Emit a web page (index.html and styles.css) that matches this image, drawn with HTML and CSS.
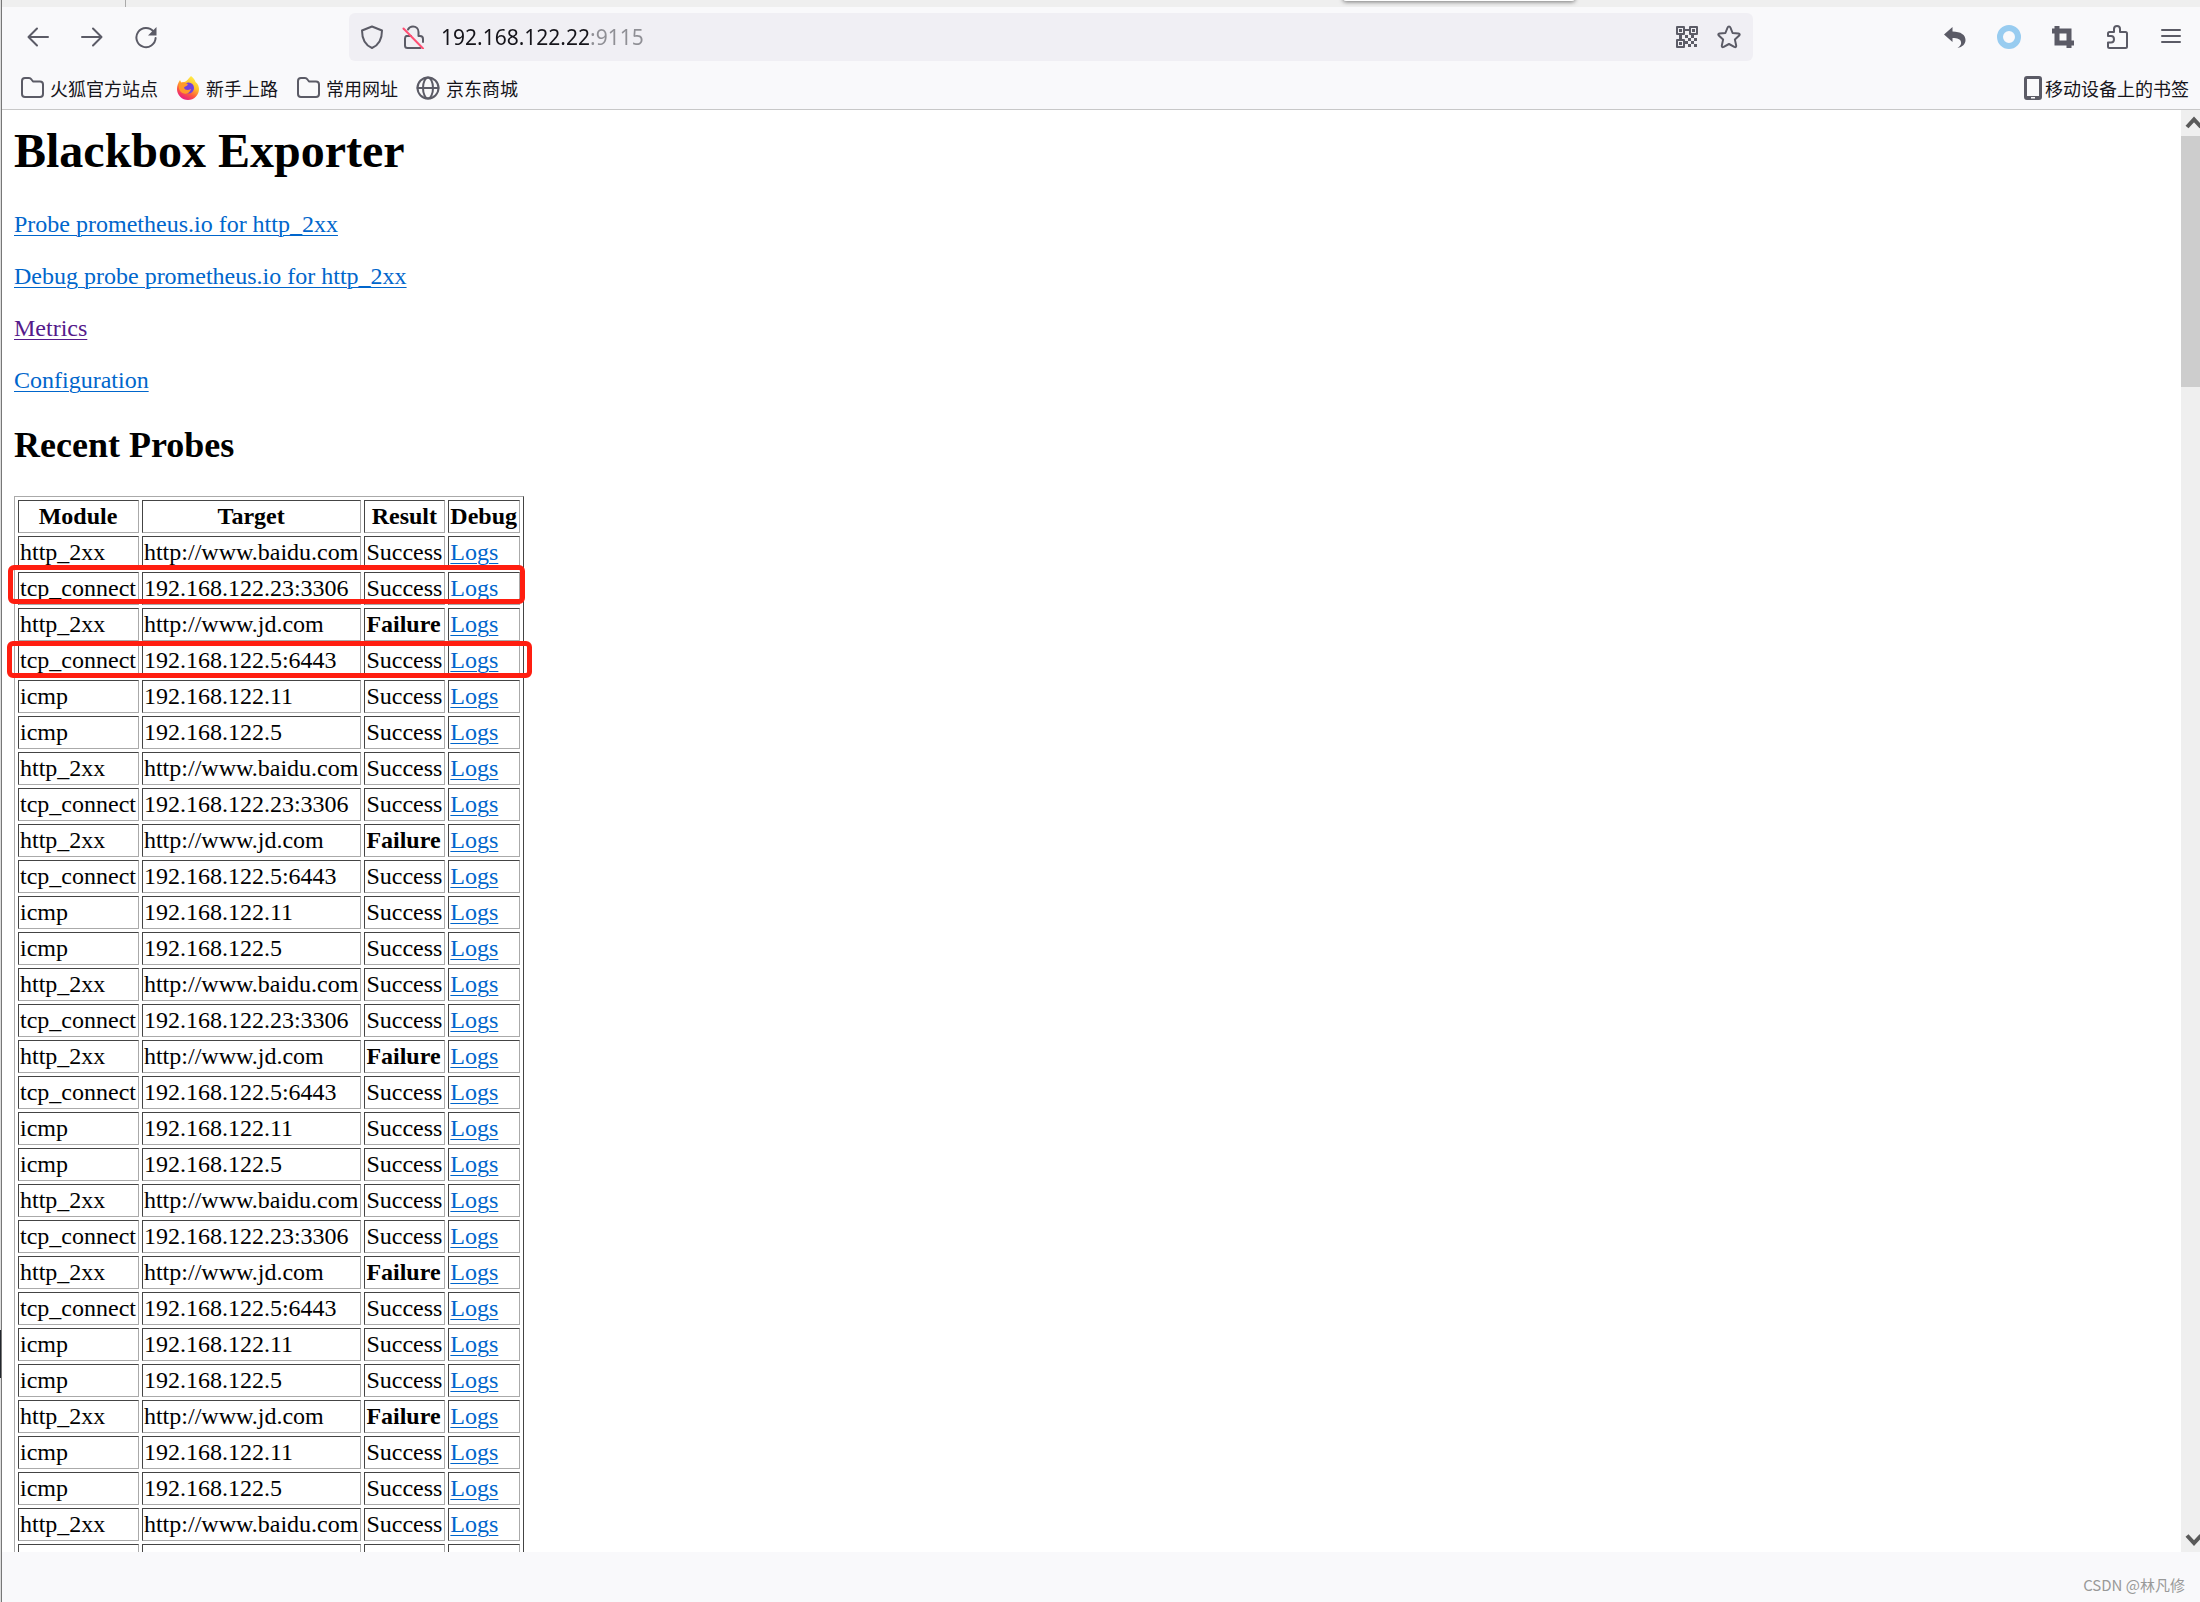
FILE: index.html
```html
<!DOCTYPE html>
<html lang="zh-CN">
<head>
<meta charset="utf-8">
<title>Blackbox Exporter</title>
<link rel="stylesheet" href="styles.css">
</head>
<body>
<div class="browser">
  <div class="tab-strip"><span class="tab-divider"></span><span class="tab-popup"></span></div>
  <header class="chrome">
    <div class="nav-bar">
      <div class="buttons">
        <button class="tool" aria-label="Back"><svg class="icon" viewBox="0 0 24 24"><path d="M22 12H3M11 3.500 2.500 12l8.500 8.500"/></svg></button>
        <button class="tool" aria-label="Forward"><svg class="icon" viewBox="0 0 24 24"><path d="M2 12h19M13 3.500 21.500 12 13 20.500"/></svg></button>
        <button class="tool" aria-label="Reload"><svg class="icon" viewBox="0 0 24 24"><path d="M19.500 6.500A9.600 9.600 0 1 0 21.600 13"/><path class="solid" d="M22.500 2v8.500h-8.500z"/></svg></button>
      </div>
      <div class="url-bar">
        <div class="url-icons">
          <svg class="icon" viewBox="0 0 24 24"><path d="M12 1.500 22 5.500C22 14 19 20 12 23 5 20 2 14 2 5.500z"/></svg>
          <svg class="icon" viewBox="0 0 24 24"><path d="M6 4.500C7 2.500 9 1.500 11 1.500c3 0 5.500 2.300 5.500 5.500v4h1.500q3 0 3 3v3M4.500 11Q3 11.500 3 13.500v7Q3 23 5.500 23h13"/><path d="M4.500 11H9"/><path class="slash" d="M1.500 3.500 21 23.500"/></svg>
        </div>
        <input class="url-input" type="text" value="192.168.122.22:9115" aria-label="Address">
        <div class="url-icons">
          <svg class="icon" viewBox="0 0 24 24"><path d="M2 2h7v7H2zM15 2h7v7h-7zM2 15h7v7H2z"/><path class="solid" d="M4 4h3v3H4zM17 4h3v3h-3zM4 17h3v3H4zM9 4h6v2H9zM4 9h3v6H4zM9 16h4v3H9zM10 10h3v3h-3zM16 10h3v3h-3zM13 13h3v3h-3zM19 13h3v3h-3zM16 16h3v3h-3zM13 19h3v3h-3zM19 19h3v3h-3z"/></svg>
          <svg class="icon" viewBox="0 0 24 24"><path d="M12 1.500q1 0 1.400 1L15.600 8l5.900.6q2 .4.700 2L17.900 14.600l1.300 6q.1 2.200-1.900 1.300L12 19l-5.300 2.900q-2 .9-1.900-1.300l1.300-6L1.800 10.600q-1.300-1.600.7-2L8.400 8l2.200-5.500q.4-1 1.400-1z"/></svg>
        </div>
      </div>
      <div class="buttons">
        <button class="tool" aria-label="Undo"><svg class="icon" viewBox="0 0 24 24"><path class="solid" d="M1 9.500 9.500 2v4.500C18 6.500 22.500 10 22.500 15c0 4-3 7-8 8 3-2 4-4 3.500-6-.5-3-3.500-4-8.500-4v4z"/></svg></button>
        <button class="tool" aria-label="Status"><svg class="icon" viewBox="0 0 24 24"><circle class="ring" cx="12" cy="12" r="9"/></svg></button>
        <button class="tool" aria-label="Screenshot"><svg class="icon" viewBox="0 0 24 24"><path class="thick" d="M1 6h17v17M6 1v17h17"/></svg></button>
        <button class="tool" aria-label="Extensions"><svg class="icon" viewBox="0 0 24 24"><path d="M3 11V8.500Q3 7 4.500 7H9V4q0-3 3-3t3 3v3h5.500Q22 7 22 8.500v13q0 1.500-1.500 1.500h-16Q3 23 3 21.500v-4h3q3 0 3-3.250T6 11z"/></svg></button>
        <button class="tool" aria-label="Menu"><svg class="icon" viewBox="0 0 24 24"><path d="M3 5h18M3 11h18M3 17h18"/></svg></button>
      </div>
    </div>
    <nav class="bookmarks">
      <a class="bookmark" href="#"><svg class="icon" viewBox="0 0 24 24"><path d="M2 5q0-3 3-3h4q1.500 0 2.500 1.500L13 5.500h7q3 0 3 3V18q0 3-3 3H5q-3 0-3-3z"/></svg>火狐官方站点</a>
      <a class="bookmark" href="#"><svg class="icon" viewBox="0 0 24 24"><defs><linearGradient id="flame" x1=".8" y1="0" x2=".3" y2="1"><stop offset="0" stop-color="#fff44f"/><stop offset=".4" stop-color="#ffc02a"/><stop offset=".7" stop-color="#ff5a3d"/><stop offset="1" stop-color="#e4168a"/></linearGradient></defs><path fill="url(#flame)" stroke="none" d="M15 0c2.500 2 4 4 4.500 6 2.500 2 3.500 4.500 3.500 7A11 11 0 0 1 1 13c0-3 1-6 3-9l1.500 3 4-1.500C11 5 12 3 15 0z"/><circle cx="12.500" cy="12" r="5.500" fill="#7140e0" stroke="none"/><path fill="#ff9a2a" stroke="none" d="M3.500 7c3-1.500 6-1 8.500 1.500-1 2-3 1.500-4 3 1 3 4 3 7 1.500-1 4-5 6-8.500 4S2 11 3.500 7z"/></svg>新手上路</a>
      <a class="bookmark" href="#"><svg class="icon" viewBox="0 0 24 24"><path d="M2 5q0-3 3-3h4q1.500 0 2.500 1.500L13 5.500h7q3 0 3 3V18q0 3-3 3H5q-3 0-3-3z"/></svg>常用网址</a>
      <a class="bookmark" href="#"><svg class="icon" viewBox="0 0 24 24"><circle cx="12" cy="12" r="10.500"/><ellipse cx="12" cy="12" rx="5" ry="10.500"/><path d="M1.500 12h21"/></svg>京东商城</a>
      <a class="bookmark mobile" href="#"><svg class="icon phone" viewBox="0 0 18 24"><path class="solid" fill-rule="evenodd" d="M3 0h12q3 0 3 3v18q0 3-3 3H3q-3 0-3-3V3q0-3 3-3zM3 3v17h12V3zM7 21v1.500h4V21z"/></svg>移动设备上的书签</a>
    </nav>
  </header>
  <div class="viewport">
    <main class="page">
      <h1>Blackbox Exporter</h1>
      <p><a href="#">Probe prometheus.io for http_2xx</a></p>
      <p><a href="#">Debug probe prometheus.io for http_2xx</a></p>
      <p><a class="visited" href="#">Metrics</a></p>
      <p><a href="#">Configuration</a></p>
      <h2>Recent Probes</h2>
      <div class="probes">
        <table>
          <thead><tr><th>Module</th><th>Target</th><th>Result</th><th>Debug</th></tr></thead>
          <tbody>
            <tr><td>http_2xx</td><td>http://www.baidu.com</td><td>Success</td><td><a href="#">Logs</a></td></tr>
            <tr><td>tcp_connect</td><td>192.168.122.23:3306</td><td>Success</td><td><a href="#">Logs</a></td></tr>
            <tr><td>http_2xx</td><td>http://www.jd.com</td><td><strong>Failure</strong></td><td><a href="#">Logs</a></td></tr>
            <tr><td>tcp_connect</td><td>192.168.122.5:6443</td><td>Success</td><td><a href="#">Logs</a></td></tr>
            <tr><td>icmp</td><td>192.168.122.11</td><td>Success</td><td><a href="#">Logs</a></td></tr>
            <tr><td>icmp</td><td>192.168.122.5</td><td>Success</td><td><a href="#">Logs</a></td></tr>
            <tr><td>http_2xx</td><td>http://www.baidu.com</td><td>Success</td><td><a href="#">Logs</a></td></tr>
            <tr><td>tcp_connect</td><td>192.168.122.23:3306</td><td>Success</td><td><a href="#">Logs</a></td></tr>
            <tr><td>http_2xx</td><td>http://www.jd.com</td><td><strong>Failure</strong></td><td><a href="#">Logs</a></td></tr>
            <tr><td>tcp_connect</td><td>192.168.122.5:6443</td><td>Success</td><td><a href="#">Logs</a></td></tr>
            <tr><td>icmp</td><td>192.168.122.11</td><td>Success</td><td><a href="#">Logs</a></td></tr>
            <tr><td>icmp</td><td>192.168.122.5</td><td>Success</td><td><a href="#">Logs</a></td></tr>
            <tr><td>http_2xx</td><td>http://www.baidu.com</td><td>Success</td><td><a href="#">Logs</a></td></tr>
            <tr><td>tcp_connect</td><td>192.168.122.23:3306</td><td>Success</td><td><a href="#">Logs</a></td></tr>
            <tr><td>http_2xx</td><td>http://www.jd.com</td><td><strong>Failure</strong></td><td><a href="#">Logs</a></td></tr>
            <tr><td>tcp_connect</td><td>192.168.122.5:6443</td><td>Success</td><td><a href="#">Logs</a></td></tr>
            <tr><td>icmp</td><td>192.168.122.11</td><td>Success</td><td><a href="#">Logs</a></td></tr>
            <tr><td>icmp</td><td>192.168.122.5</td><td>Success</td><td><a href="#">Logs</a></td></tr>
            <tr><td>http_2xx</td><td>http://www.baidu.com</td><td>Success</td><td><a href="#">Logs</a></td></tr>
            <tr><td>tcp_connect</td><td>192.168.122.23:3306</td><td>Success</td><td><a href="#">Logs</a></td></tr>
            <tr><td>http_2xx</td><td>http://www.jd.com</td><td><strong>Failure</strong></td><td><a href="#">Logs</a></td></tr>
            <tr><td>tcp_connect</td><td>192.168.122.5:6443</td><td>Success</td><td><a href="#">Logs</a></td></tr>
            <tr><td>icmp</td><td>192.168.122.11</td><td>Success</td><td><a href="#">Logs</a></td></tr>
            <tr><td>icmp</td><td>192.168.122.5</td><td>Success</td><td><a href="#">Logs</a></td></tr>
            <tr><td>http_2xx</td><td>http://www.jd.com</td><td><strong>Failure</strong></td><td><a href="#">Logs</a></td></tr>
            <tr><td>icmp</td><td>192.168.122.11</td><td>Success</td><td><a href="#">Logs</a></td></tr>
            <tr><td>icmp</td><td>192.168.122.5</td><td>Success</td><td><a href="#">Logs</a></td></tr>
            <tr><td>http_2xx</td><td>http://www.baidu.com</td><td>Success</td><td><a href="#">Logs</a></td></tr>
            <tr><td>http_2xx</td><td>http://www.jd.com</td><td><strong>Failure</strong></td><td><a href="#">Logs</a></td></tr>
          </tbody>
        </table>
        <span class="marker marker-first"></span>
        <span class="marker marker-second"></span>
      </div>
    </main>
    <div class="scrollbar">
      <svg class="arrow" viewBox="0 0 26 26"><path d="M6 17 13 9.500 20 17"/></svg>
      <span class="thumb"></span>
      <svg class="arrow" viewBox="0 0 26 26"><path d="M6 9.500 13 17l7-7.500"/></svg>
    </div>
  </div>
  <footer class="footer">CSDN @林凡修</footer>
</div>
</body>
</html>
```
FILE: styles.css
```css
* {
  box-sizing: border-box;
}

/* The strip left of the window shows a sliver of what lies behind it */
body {
  margin: 0;
  padding-left: 1px;
  background: linear-gradient(#dcdcdc 83%, #22262c 83%, #22262c 86%, #dcdcdc 86%);
}

.browser {
  display: flex;
  flex-direction: column;
  height: 100vh;
  border-left: 1px solid #777;
  background: #f9f9fb;
  overflow: hidden;
}

/* Window chrome */
.tab-strip {
  position: relative;
  flex: none;
  height: 7px;
  background: #efefef;
  overflow: hidden;
}

.tab-divider {
  display: block;
  width: 124px;
  height: 100%;
  border-right: 1px solid #aaa;
}

.tab-popup {
  position: absolute;
  top: -9px;
  left: 61%;
  width: 232px;
  height: 10px;
  border-radius: 3px;
  background: #fff;
  box-shadow: 0 1px 4px #777;
}

.chrome {
  flex: none;
  border-bottom: 1px solid #c8c8c8;
  font-family: "Noto Sans", "Noto Sans CJK SC", sans-serif;
  color: #15141a;
}

.nav-bar {
  display: flex;
  align-items: center;
  height: 60px;
  padding: 0 5px 0 12px;
}

.buttons {
  display: flex;
  gap: 6px;
}

.tool {
  display: flex;
  align-items: center;
  justify-content: center;
  width: 48px;
  height: 48px;
  padding: 0;
  border: 0;
  background: none;
}

.icon {
  flex: none;
  width: 24px;
  height: 24px;
  fill: none;
  stroke: #5b5b66;
  stroke-width: 2;
  stroke-linecap: round;
  stroke-linejoin: round;
}

.icon .solid {
  fill: #5b5b66;
  stroke: none;
}

.icon .slash {
  stroke: #ff4f73;
}

.icon .ring {
  stroke: #98ccf0;
  stroke-width: 6;
}

.icon .thick {
  stroke-width: 5;
  stroke-linecap: butt;
  stroke-linejoin: miter;
}

.url-bar {
  display: flex;
  flex: 1;
  align-items: center;
  height: 48px;
  margin: 0 178px 0 179px;
  padding: 0 12px 0 11px;
  border-radius: 6px;
  background: #f0eff4;
}

.url-icons {
  display: flex;
  gap: 18px;
}

/* The port is dimmed, so the text is painted by a two-tone background */
.url-input {
  flex: 1;
  min-width: 0;
  height: 40px;
  padding: 0 15px;
  border: 0;
  background: linear-gradient(90deg, #15141a 164px, #8f8f95 164px);
  background-clip: text;
  color: transparent;
  font: 21px "Noto Sans", sans-serif;
}

.bookmarks {
  display: flex;
  align-items: center;
  gap: 18px;
  height: 42px;
  padding: 0 11px 0 18px;
}

.bookmark {
  display: flex;
  align-items: center;
  gap: 6px;
  color: #15141a;
  font-family: "Noto Sans CJK SC", sans-serif;
  font-size: 18px;
  line-height: 24px;
  text-decoration: none;
}

.mobile {
  gap: 3px;
  margin-left: auto;
}

.phone {
  width: 18px;
}

/* Page content */
.viewport {
  display: flex;
  flex: 1;
  min-height: 0;
  background: #fff;
}

.page {
  flex: 1;
  padding: 12px;
  overflow: hidden;
  color: #000;
  font: 24px/28px "Liberation Serif", serif;
}

.page h1 {
  margin: 0 0 30px;
  font-size: 48px;
  line-height: 58px;
}

.page h2 {
  margin: 30px 0;
  font-size: 36px;
  line-height: 42px;
}

.page p {
  margin: 0;
}

.page p + p {
  margin-top: 24px;
}

.page a {
  color: #0066cc;
  text-decoration-thickness: 1px;
  text-underline-offset: 3px;
}

.page a.visited {
  color: #551a8b;
}

.probes {
  position: relative;
  width: max-content;
}

table {
  border: 1px solid;
  border-color: #aaa #444 #444 #aaa;
  border-spacing: 3px;
}

th,
td {
  padding: 2px 2px 2px 1px;
  border: 1px solid;
  border-color: #444 #aaa #aaa #444;
  line-height: 27px;
  white-space: nowrap;
}

td {
  text-align: left;
}

.marker {
  position: absolute;
  border: 5px solid #ff1e10;
  border-radius: 6px;
}

.marker-first {
  top: 69px;
  left: -6px;
  right: -1px;
  height: 39px;
}

.marker-second {
  top: 145px;
  left: -7px;
  right: -8px;
  height: 37px;
}

.scrollbar {
  display: flex;
  flex: none;
  flex-direction: column;
  width: 19px;
  background: #efefef;
  overflow: hidden;
}

.thumb {
  height: 251px;
  margin-bottom: auto;
  background: #cdcdcd;
}

.arrow {
  flex: none;
  width: 26px;
  height: 26px;
  fill: none;
  stroke: #5a5a5a;
  stroke-width: 4;
}

.footer {
  display: flex;
  flex: none;
  align-items: center;
  justify-content: flex-end;
  height: 50px;
  padding: 14px 15px 0 0;
  color: #999;
  font: 15px "Noto Sans CJK SC", sans-serif;
}
```
